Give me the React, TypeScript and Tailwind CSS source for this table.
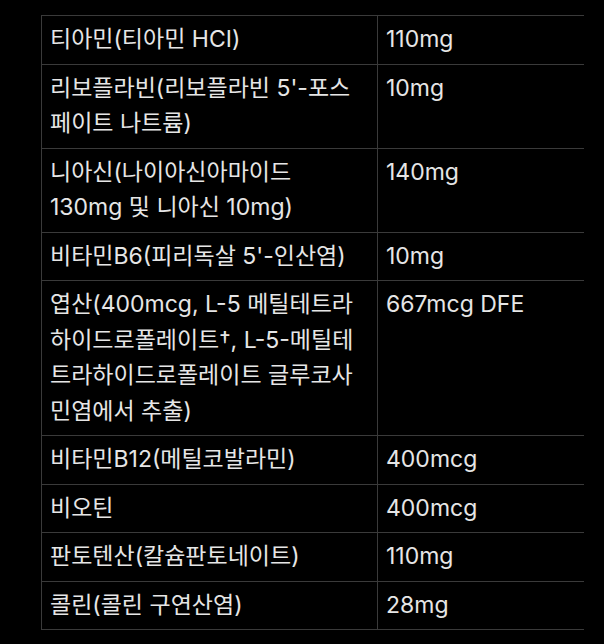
const rows: [string, string][] = [
  ["티아민(티아민 HCI)", "110mg"],
  ["리보플라빈(리보플라빈 5'-포스페이트 나트륨)", "10mg"],
  ["니아신(나이아신아마이드 130mg 및 니아신 10mg)", "140mg"],
  ["비타민B6(피리독살 5'-인산염)", "10mg"],
  ["엽산(400mcg, L-5 메틸테트라하이드로폴레이트†, L-5-메틸테트라하이드로폴레이트 글루코사민염에서 추출)", "667mcg DFE"],
  ["비타민B12(메틸코발라민)", "400mcg"],
  ["비오틴", "400mcg"],
  ["판토텐산(칼슘판토네이트)", "110mg"],
  ["콜린(콜린 구연산염)", "28mg"],
];

export default function App() {
  return (
    <div
      className="w-[604px] h-[644px] bg-black pt-[15px] pl-[41px]"
      style={{ fontFamily: 'Inter, "Noto Sans CJK KR", sans-serif' }}
    >
      <table className="w-[543px] border-collapse table-fixed text-[23px] leading-[35.5px] text-[#e6e6e6]">
        <colgroup>
          <col className="w-[336px]" />
          <col />
        </colgroup>
        <tbody>
          {rows.map(([name, amount]) => (
            <tr key={name} className="border-y border-[#3a3a3a]">
              <td className="border-l border-[#3a3a3a] px-2 py-[6px] align-top">{name}</td>
              <td className="border-l border-[#3a3a3a] px-2 py-[6px] align-top">{amount}</td>
            </tr>
          ))}
        </tbody>
      </table>
    </div>
  );
}
